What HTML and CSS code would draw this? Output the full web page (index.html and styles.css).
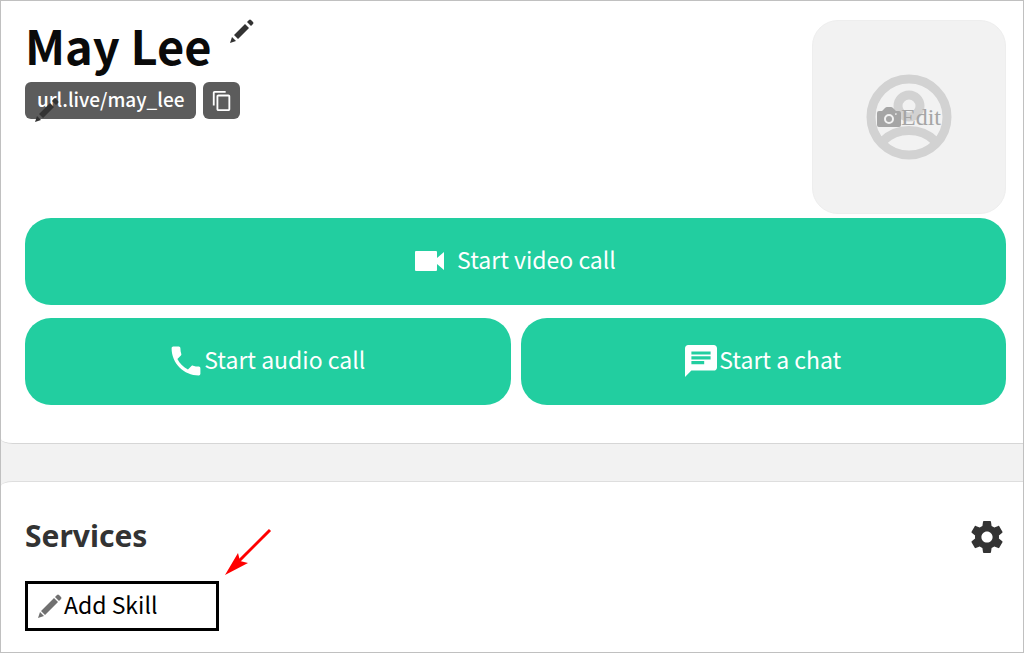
FILE: index.html
```
<!DOCTYPE html>
<html lang="en">
<head>
    <meta charset="UTF-8">
    <meta name="viewport" content="width=device-width, initial-scale=1.0">
    <title>May Lee</title>
    <link rel="stylesheet" href="styles.css">
</head>
<body>
    <main class="page">
        <section class="card profile">
            <div class="profile-header">
                <div class="profile-info">
                    <div class="name-row">
                        <h1>May Lee</h1>
                        <button class="icon-button edit-name" aria-label="Edit name">
                            <svg viewBox="0 0 24 24" width="24" height="24"><path d="M0 24l2-6 4 4zM4 16L15 5l4 4L8 20zM17 3l2-2q1-1 2 0l2 2q1 1 0 2L21 7z"/></svg>
                        </button>
                    </div>
                    <div class="url-row">
                        <a href="#" class="url">url.live/may_lee</a>
                        <button class="copy" aria-label="Copy link">
                            <svg viewBox="0 0 24 24" width="22" height="22"><path d="M16 1H4c-1.100 0-2 .9-2 2v14h2V3h12V1zm3 4H8c-1.100 0-2 .9-2 2v14c0 1.100.9 2 2 2h11c1.100 0 2-.9 2-2V7c0-1.100-.9-2-2-2zm0 16H8V7h11v14z"/></svg>
                        </button>
                        <button class="icon-button edit-url" aria-label="Edit link">
                            <svg viewBox="0 0 24 24" width="24" height="24"><path d="M0 24l2-6 4 4zM4 16L15 5l4 4L8 20zM17 3l2-2q1-1 2 0l2 2q1 1 0 2L21 7z"/></svg>
                        </button>
                    </div>
                </div>
                <button class="avatar">
                    <svg class="avatar-icon" viewBox="0 0 86 86" width="86" height="86">
                        <circle cx="43" cy="43" r="38"/>
                        <circle cx="43" cy="32" r="11"/>
                        <path d="M17 67c14-14 38-14 52 0"/>
                    </svg>
                    <span class="avatar-edit">
                        <svg viewBox="0 0 24 20" width="24" height="20"><path fill-rule="evenodd" d="M2 4h3l3-3q1-1 2-1h4q1 0 2 1l3 3h3q2 0 2 2v12q0 2-2 2H2q-2 0-2-2V6q0-2 2-2zM12 7a5 5 0 1 0 0 10 5 5 0 0 0 0-10zm0 2a3 3 0 1 1 0 6 3 3 0 0 1 0-6zM19 6a1 1 0 1 0 0 2 1 1 0 0 0 0-2z"/></svg>
                        Edit
                    </span>
                </button>
            </div>
            <div class="actions">
                <button class="action video">
                    <svg viewBox="0 0 30 20" width="30" height="20"><path d="M1 0h20q1 0 1 1v6l7-6v18l-7-6v6q0 1-1 1H1q-1 0-1-1V1q0-1 1-1z"/></svg>
                    <span class="label">Start video call</span>
                </button>
                <button class="action">
                    <svg viewBox="2 2 20 20" width="32" height="32"><path d="M6.620 10.790c1.440 2.830 3.760 5.140 6.590 6.590l2.200-2.200c.27-.27.67-.36 1.020-.24 1.120.37 2.330.57 3.570.57.55 0 1 .45 1 1V20c0 .55-.45 1-1 1-9.390 0-17-7.610-17-17 0-.55.45-1 1-1h3.500c.55 0 1 .45 1 1 0 1.250.2 2.450.57 3.570.11.35.03.74-.25 1.020l-2.200 2.200z"/></svg>
                    <span class="label">Start audio call</span>
                </button>
                <button class="action">
                    <svg viewBox="2 2 20 20" width="32" height="32"><path d="M20 2H4c-1.100 0-1.990.9-1.990 2L2 22l4-4h14c1.100 0 2-.9 2-2V4c0-1.100-.9-2-2-2zM6 9h12v2H6V9zm8 5H6v-2h8v2zm4-6H6V6h12v2z"/></svg>
                    <span class="label">Start a chat</span>
                </button>
            </div>
        </section>

        <section class="card services">
            <div class="services-header">
                <h2>Services</h2>
                <button class="icon-button" aria-label="Services settings">
                    <svg viewBox="2 2 20 20" width="32" height="32"><path d="M19.430 12.980c.04-.32.07-.64.07-.98s-.03-.66-.07-.98l2.110-1.650c.19-.15.24-.42.12-.64l-2-3.460c-.12-.22-.39-.3-.61-.22l-2.490 1c-.52-.4-1.080-.73-1.690-.98l-.38-2.650C14.460 2.180 14.250 2 14 2h-4c-.25 0-.46.18-.49.42l-.38 2.650c-.61.25-1.170.59-1.690.98l-2.490-1c-.23-.09-.49 0-.61.22l-2 3.460c-.13.22-.07.49.12.64l2.110 1.650c-.04.32-.07.65-.07.98s.03.66.07.98l-2.110 1.650c-.19.15-.24.42-.12.64l2 3.460c.12.22.39.3.61.22l2.490-1c.52.4 1.080.73 1.690.98l.38 2.650c.03.24.24.42.49.42h4c.25 0 .46-.18.49-.42l.38-2.650c.61-.25 1.170-.59 1.690-.98l2.490 1c.23.09.49 0 .61-.22l2-3.460c.12-.22.07-.49-.12-.64l-2.110-1.650zM12 15.500c-1.930 0-3.500-1.570-3.500-3.500s1.570-3.500 3.500-3.500 3.500 1.570 3.500 3.500-1.570 3.500-3.500 3.500z"/></svg>
                </button>
            </div>
            <div class="skill-row">
                <button class="add-skill">
                    <svg viewBox="0 0 24 24" width="24" height="24"><path d="M0 24l2-6 4 4zM3 17L16 4l4 4L7 21zM17 3l2-2q1-1 2 0l2 2q1 1 0 2L21 7z"/></svg>
                    <span class="label">Add Skill</span>
                </button>
                <svg class="arrow" viewBox="0 0 48 48" width="48" height="48"><path class="arrow-line" d="M46 2L14 34"/><path class="arrow-head" d="M1 47L14 25l2 8 8 2z"/></svg>
            </div>
        </section>
    </main>
</body>
</html>
```
FILE: styles.css
```
* {
    box-sizing: border-box;
}
body {
    margin: 0;
    font-family: "Noto Sans CJK KR", "Noto Sans", sans-serif;
    background-color: #f2f2f2;
    color: #000;
}
button {
    font: inherit;
    border: 0;
    padding: 0;
    background: none;
    cursor: pointer;
}
svg {
    display: block;
    fill: currentColor;
    flex: none;
}
h1, h2 {
    margin: 0;
}
.page {
    display: flex;
    flex-direction: column;
    gap: 37px;
    min-height: 100vh;
    border: 1px solid #c0c0c0;
    overflow: hidden;
}
.card {
    background-color: #fff;
    padding: 0 17px 0 24px;
}
.profile {
    padding-top: 18px;
    padding-bottom: 38px;
    border-bottom: 1px solid #d6d6d6;
    border-radius: 0 0 0 12px / 0 0 0 5px;
}
.profile-header {
    display: flex;
    justify-content: space-between;
    align-items: flex-start;
    margin-bottom: 4px;
}
.name-row {
    display: flex;
    align-items: flex-start;
    gap: 18px;
    height: 63px;
}
h1 {
    font-size: 47px;
    line-height: 52px;
    color: #0a0a0a;
}
.icon-button {
    color: #333;
}
.url-row {
    position: relative;
    display: flex;
    gap: 7px;
}
.url, .copy {
    height: 37px;
    border-radius: 6px;
    background-color: #5c5c5c;
    color: #fff;
}
.url {
    padding: 0 12px;
    font-size: 19px;
    font-weight: 500;
    line-height: 33px;
    text-decoration: none;
}
.copy {
    width: 37px;
    display: grid;
    place-items: center;
}
.edit-url {
    position: absolute;
    left: 10px;
    top: 16px;
}
.avatar {
    width: 194px;
    height: 194px;
    margin-top: 1px;
    display: grid;
    place-items: center;
    border: 1px solid #eee;
    border-radius: 26px;
    background-color: #f2f2f2;
    color: #a5a5a5;
}
.avatar-icon, .avatar-edit {
    grid-area: 1 / 1;
}
.avatar-icon {
    fill: none;
    stroke: #d2d2d2;
    stroke-width: 9px;
}
.avatar-edit {
    z-index: 1;
    display: flex;
    align-items: center;
    font-family: "Liberation Serif", serif;
    font-size: 24px;
}
.actions {
    display: grid;
    grid-template-columns: 1fr 1fr;
    gap: 13px 10px;
}
.action {
    display: flex;
    align-items: center;
    justify-content: center;
    gap: 2px;
    height: 87px;
    padding-bottom: 2px;
    border-radius: 26px;
    background-color: #22cea0;
    color: #fff;
    font-size: 23px;
}
.label {
    padding-bottom: 4px;
}
.video {
    grid-column: 1 / 3;
    gap: 12px;
}
.services {
    flex: 1;
    padding-top: 33px;
    border-top: 1px solid #dedede;
    border-radius: 12px 0 0 0 / 5px 0 0 0;
}
.services-header {
    display: flex;
    justify-content: space-between;
    align-items: center;
    height: 44px;
    padding-right: 3px;
    margin-bottom: 22px;
}
h2 {
    font-family: "Noto Sans", sans-serif;
    font-size: 30px;
    line-height: 40px;
    padding-bottom: 2px;
    color: #333;
}
.skill-row {
    position: relative;
    display: flex;
}
.add-skill {
    display: flex;
    align-items: center;
    gap: 2px;
    width: 194px;
    height: 50px;
    padding-left: 10px;
    border: 3px solid #000;
    font-size: 23px;
}
.add-skill svg {
    color: #707070;
}
.arrow {
    position: absolute;
    left: 199px;
    top: -53px;
}
.arrow-line {
    stroke: #f00;
    stroke-width: 3px;
}
.arrow-head {
    fill: #f00;
}
```
